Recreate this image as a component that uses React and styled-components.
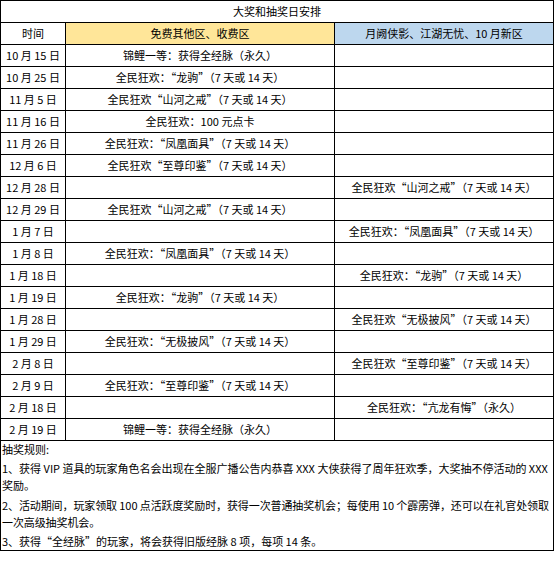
import React from "react";
import styled, { createGlobalStyle } from "styled-components";

const Global = createGlobalStyle`
  html, body { margin: 0; padding: 0; background: #fff; }
  body { font-family: "Noto Sans CJK SC", "Microsoft YaHei", sans-serif; color: #000; }
`;

const Sheet = styled.div`
  display: grid;
  grid-template-columns: 64px 268px 218px;
  grid-template-rows: repeat(20, 21px) 109px;
  gap: 1px;
  padding: 1px;
  width: max-content;
  background: #000;
  font-size: 11px;
`;

const Cell = styled.div`
  background: ${(p) => p.$bg || "#fff"};
  grid-column: ${(p) => p.$span || "auto"};
  display: flex;
  align-items: center;
  justify-content: center;
  white-space: nowrap;
  line-height: 1;
`;

const Rules = styled.div`
  grid-column: 1 / -1;
  background: #fff;
  display: flex;
  flex-direction: column;
  gap: 2.3px;
  padding-left: 1px;
  line-height: 17px;
  font-size: 11px;
`;

const Para = styled.p`
  margin: 0;
  white-space: nowrap;
  letter-spacing: ${(p) => (p.$tight ? "-0.1px" : "0")};
`;

const Y = "#FFE699";
const B = "#BDD7EE";

const rows = [
  ["10 月 15 日", "锦鲤一等：获得全经脉（永久）", ""],
  ["10 月 25 日", "全民狂欢：“龙驹”（7 天或 14 天）", ""],
  ["11 月 5 日", "全民狂欢“山河之戒”（7 天或 14 天）", ""],
  ["11 月 16 日", "全民狂欢：100 元点卡", ""],
  ["11 月 26 日", "全民狂欢：“凤凰面具”（7 天或 14 天）", ""],
  ["12 月 6 日", "全民狂欢“至尊印鉴”（7 天或 14 天）", ""],
  ["12 月 28 日", "", "全民狂欢“山河之戒”（7 天或 14 天）"],
  ["12 月 29 日", "全民狂欢“山河之戒”（7 天或 14 天）", ""],
  ["1 月 7 日", "", "全民狂欢：“凤凰面具”（7 天或 14 天）"],
  ["1 月 8 日", "全民狂欢：“凤凰面具”（7 天或 14 天）", ""],
  ["1 月 18 日", "", "全民狂欢：“龙驹”（7 天或 14 天）"],
  ["1 月 19 日", "全民狂欢：“龙驹”（7 天或 14 天）", ""],
  ["1 月 28 日", "", "全民狂欢“无极披风”（7 天或 14 天）"],
  ["1 月 29 日", "全民狂欢：“无极披风”（7 天或 14 天）", ""],
  ["2 月 8 日", "", "全民狂欢“至尊印鉴”（7 天或 14 天）"],
  ["2 月 9 日", "全民狂欢：“至尊印鉴”（7 天或 14 天）", ""],
  ["2 月 18 日", "", "全民狂欢：“亢龙有悔”（永久）"],
  ["2 月 19 日", "锦鲤一等：获得全经脉（永久）", ""],
];

export default function App() {
  return (
    <>
      <Global />
      <Sheet>
        <Cell $span="1 / -1">大奖和抽奖日安排</Cell>
        <Cell>时间</Cell>
        <Cell $bg={Y}>免费其他区、收费区</Cell>
        <Cell $bg={B}>月阙侠影、江湖无忧、10 月新区</Cell>
        {rows.map((r, i) => (
          <React.Fragment key={i}>
            <Cell>{r[0]}</Cell>
            <Cell>{r[1]}</Cell>
            <Cell>{r[2]}</Cell>
          </React.Fragment>
        ))}
        <Rules>
          <Para>抽奖规则:</Para>
          <Para>
            1、获得 VIP 道具的玩家角色名会出现在全服广播公告内恭喜 XXX 大侠获得了周年狂欢季，大奖抽不停活动的 XXX
            <br />
            奖励。
          </Para>
          <Para $tight>
            2、活动期间，玩家领取 100 点活跃度奖励时，获得一次普通抽奖机会；每使用 10 个霹雳弹，还可以在礼官处领取
            <br />
            一次高级抽奖机会。
          </Para>
          <Para>3、获得“全经脉”的玩家，将会获得旧版经脉 8 项，每项 14 条。</Para>
        </Rules>
      </Sheet>
    </>
  );
}
